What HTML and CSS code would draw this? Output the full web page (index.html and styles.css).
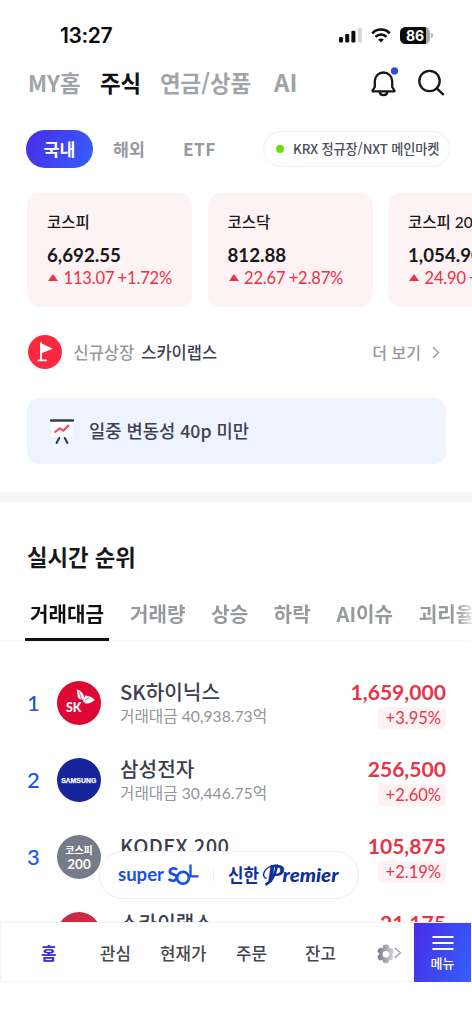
FILE: index.html
```html
<!DOCTYPE html>
<html lang="ko">
<head>
<meta charset="utf-8">
<meta name="viewport" content="width=device-width, initial-scale=1">
<title>주식</title>
<link rel="stylesheet" href="styles.css">
</head>
<body>
<div class="app">
  <header class="status">
    <span class="clock">13:27</span>
    <div class="status-icons">
      <svg width="25" height="16" viewBox="0 0 25 16"><rect x="1" y="10" width="4" height="5.5" rx="1.2"/><rect x="7.2" y="7" width="4" height="8.5" rx="1.2"/><rect x="13.4" y="3.7" width="4" height="11.8" rx="1.2"/><rect x="19.8" y="1" width="4" height="14.5" rx="1.2" fill="#d6d6d6"/></svg>
      <svg class="wifi" width="20" height="15" viewBox="0 0 20 15" fill="none" stroke="#0b0b0b" stroke-width="2.5"><path d="M1.2 5.4C6 .3 14 .3 18.800 5.400"/><path d="M4.500 8.800C7.500 5.700 12.500 5.700 15.500 8.800"/><path d="M10 14.600l-2.800-3.100c1.600-1.400 4-1.400 5.600 0z" fill="#0b0b0b" stroke="none"/></svg>
      <span class="battery">86</span><i class="battery-cap"></i>
    </div>
  </header>
  <nav class="main-nav">
    <a class="n-my">MY홈</a><a class="n-stock on">주식</a><a class="n-pension">연금/상품</a><a class="n-ai">AI</a>
    <div class="nav-actions">
      <svg width="30" height="32" viewBox="0 0 30 32" fill="none" stroke="#161616" stroke-width="2.300" stroke-linejoin="round" stroke-linecap="round"><path d="M4.800 14.200a8.700 8.700 0 0 1 17.400 0v5.800l2.200 3.500v.9H2.600v-.9l2.200-3.500z"/><path d="M9.800 25.200c.3 4 7.100 4 7.400 0"/><circle cx="24.500" cy="3.900" r="3.600" fill="#304be3" stroke="none"/></svg>
      <svg class="search" width="28" height="28" viewBox="0 0 28 28" fill="none" stroke="#161616" stroke-width="2.300" stroke-linecap="round"><circle cx="12.500" cy="12" r="10.200"/><path d="M19.800 19.300l6.300 6"/></svg>
    </div>
  </nav>
  <div class="chips">
    <a class="chip">국내</a><a class="sub s-over">해외</a><a class="sub s-etf">ETF</a>
    <div class="market"><i></i><span>KRX 정규장/NXT 메인마켓</span></div>
  </div>
  <section class="cards">
    <article class="card"><h3>코스피</h3><b>6,692.55</b><p><i></i><span>113.07 +1.72%</span></p></article>
    <article class="card"><h3>코스닥</h3><b>812.88</b><p><i></i><span>22.67 +2.87%</span></p></article>
    <article class="card"><h3>코스피 200</h3><b>1,054.90</b><p><i></i><span>24.90 +2.42%</span></p></article>
  </section>
  <div class="news">
    <svg width="34" height="34" viewBox="0 0 34 34"><circle cx="17" cy="17" r="17" fill="#fb2840"/><path d="M13 8v17.200M10.300 25.400h7.800" stroke="#fff" stroke-width="1.800" stroke-linecap="round"/><path d="M13 8.200l11.800 5.500L13 18.400z" fill="#fff"/></svg>
    <span class="news-kind">신규상장</span><strong>스카이랩스</strong>
    <a class="more">더 보기</a>
    <svg class="chev" width="8" height="13" viewBox="0 0 8 13" fill="none" stroke="#999ca1" stroke-width="1.400"><path d="M1 1.300l5.500 5.200L1 11.700"/></svg>
  </div>
  <div class="banner">
    <svg width="26" height="27" viewBox="0 0 26 27" fill="none" stroke-linecap="round"><path d="M2.500 3h21v16h-21z" fill="#fff"/><path d="M2 2.500h22" stroke="#373b4d" stroke-width="2.300"/><path d="M6.300 13.800l4.400-3.400 3.700 2.200 5-5" stroke="#ef5368" stroke-width="2.300"/><path d="M10.200 20l-2.600 4.900M15.800 20l2.600 4.900" stroke="#373b4d" stroke-width="2.100"/></svg>
    <span>일중 변동성 40p 미만</span>
  </div>
  <div class="divider"></div>
  <h2>실시간 순위</h2>
  <div class="tabs">
    <a class="tab on">거래대금</a><a class="tab">거래량</a><a class="tab">상승</a><a class="tab">하락</a><a class="tab">AI이슈</a><a class="tab">괴리율</a>
  </div>
  <section class="ranks">
    <div class="row"><span class="rank">1</span>
      <div class="logo sk"><svg width="44" height="44" viewBox="0 0 44 44"><text x="9" y="30.800" textLength="15.500" lengthAdjust="spacingAndGlyphs">SK</text><g fill="#fff"><path d="M19.700 8.500c4 1.100 6.600 3.700 7.700 7.500l-1 2.800c-2.100-.2-3.900-.7-5.400-1.800z"/><path d="M28.300 14.600c3.800.2 6.900 1.700 9.500 4.300-2.700 2.500-5.700 3.700-9.300 3.600l-2.500-2.600z"/></g><path d="M22.300 11l2.100 7M28 19.500l4-3" stroke="#dc0735" stroke-width=".6"/></svg></div>
      <div class="name"><b>SK하이닉스</b><small>거래대금 40,938.73억</small></div>
      <div class="price"><b>1,659,000</b><em>+3.95%</em></div></div>
    <div class="row"><span class="rank">2</span>
      <div class="logo samsung"><svg width="44" height="44" viewBox="0 0 44 44"><text x="4.200" y="24.700" textLength="35" lengthAdjust="spacing">SΛMSUNG</text></svg></div>
      <div class="name"><b>삼성전자</b><small>거래대금 30,446.75억</small></div>
      <div class="price"><b>256,500</b><em>+2.60%</em></div></div>
    <div class="row"><span class="rank">3</span>
      <div class="logo kospi"><span>코스피</span><b>200</b></div>
      <div class="name kodex"><b>KODEX 200</b></div>
      <div class="price"><b>105,875</b><em>+2.19%</em></div></div>
    <div class="row"><span class="rank"></span>
      <div class="logo sky"></div>
      <div class="name"><b>스카이랩스</b></div>
      <div class="price"><b>21,175</b></div></div>
  </section>
  <div class="floating">
    <svg width="259" height="47" viewBox="0 0 259 47">
      <text class="super" x="18" y="28.500" textLength="46" lengthAdjust="spacingAndGlyphs">super</text>
      <text class="sol" x="67.500" y="29.500" textLength="11" lengthAdjust="spacingAndGlyphs">S</text>
      <circle cx="83" cy="25.800" r="5.900" fill="none" stroke="#1550ea" stroke-width="2.600"/>
      <path d="M90.500 12.500V24.300H98.500" fill="none" stroke="#1550ea" stroke-width="2.300"/>
      <path d="M113.500 17v13" stroke="#ededf3"/>
      <text class="shinhan" x="128" y="29.500" textLength="31" lengthAdjust="spacingAndGlyphs">신한</text>
      <path d="M176.800 14.500C175.500 21 172.500 29.500 165.500 32.800" fill="none" stroke="#0b2f9d" stroke-width="2.600"/>
      <text class="premier-p" x="167" y="29.500" textLength="17" lengthAdjust="spacingAndGlyphs">P</text>
      <path d="M166.500 26.500C160.500 25 163.500 13.500 178 12.900" fill="none" stroke="#0b2f9d" stroke-width="1.400"/>
      <text class="premier" x="182.500" y="29.500" textLength="56" lengthAdjust="spacingAndGlyphs">remier</text>
    </svg>
  </div>
  <nav class="bottom">
    <a class="home">홈</a><a class="b-watch">관심</a><a class="b-now">현재가</a><a class="b-order">주문</a><a class="b-bal">잔고</a>
    <svg class="gear" width="28" height="22" viewBox="0 0 28 22"><defs><linearGradient id="gear-fade"><stop stop-color="#777a80"/><stop offset="1" stop-color="#d6d7da"/></linearGradient></defs><path fill="url(#gear-fade)" fill-rule="evenodd" d="M9 2.500Q12 .5 15 2.500L15.600 5.200 18.500 5.300Q20.500 8 19.500 10.500L17.600 11 19.400 13.200Q19 16.300 17 17.500L15.300 17 14.500 19.600Q12 21 9.200 19.600L8.500 17 5.800 17.600Q3.500 15.800 3.500 13.200L5.500 11 3.500 8.800Q3.800 6 6 4.600L8.600 5.300zM12 8a3.300 3.300 0 1 0 0 6.600 3.300 3.300 0 0 0 0-6.600z"/><path d="M20.800 4.800l5.500 5-5.500 5.200" fill="none" stroke="#a4a6aa" stroke-width="1.500"/></svg>
    <a class="menu"><svg width="22" height="16" viewBox="0 0 22 16" stroke="#fff" stroke-width="2"><path d="M.5 2h21M.5 8h21M.5 14h21"/></svg><span>메뉴</span></a>
  </nav>
</div>
</body>
</html>
```
FILE: styles.css
```css
* { box-sizing: border-box; }
body { margin: 0; background: #fff; }
.app {
  position: relative; width: 472px; height: 1024px; overflow: hidden;
  display: flex; flex-direction: column;
  font-family: Lato, "Noto Sans CJK KR", sans-serif; color: #17181a;
}
.app > * { flex-shrink: 0; }
h2, h3, p { margin: 0; }
.status { height: 58px; padding: 12px 39px 0 60px; display: flex; align-items: center; justify-content: space-between; }
.clock { font: 600 21px/24px Inter, sans-serif; letter-spacing: -.4px; color: #0b0b0b; padding-top: 2px; }
.status-icons { display: flex; align-items: center; fill: #0b0b0b; }
.wifi { margin: 0 9px 0 8px; }
.battery { width: 30px; height: 17px; border-radius: 5.500px; background: linear-gradient(90deg, #0b0b0b 86%, #aaa 86%); color: #fff; font: 700 14px/17px Inter, sans-serif; text-align: center; }
.battery-cap { width: 2px; height: 5px; margin-left: 1px; background: #b5b5b5; border-radius: 0 2px 2px 0; }
.main-nav { height: 50px; padding: 0 27px 0 28px; display: flex; align-items: center; font: 700 22.400px/32px "Noto Sans CJK KR", sans-serif; color: #a1a4a6; white-space: nowrap; }
.main-nav > a { margin-top: -2px; }
.main-nav .on { color: #111; }
.n-my { width: 72px; }
.n-stock { width: 60px; }
.n-pension { width: 114px; }
.n-ai { font-size: 24px; }
.nav-actions { margin-left: auto; display: flex; align-items: center; }
.search { margin-left: 17px; }
.chips { height: 85px; padding: 22px 22px 0 26px; display: flex; align-items: flex-start; font: 700 17.300px/37px "Noto Sans CJK KR", sans-serif; color: #979a9e; }
.chip { width: 67px; height: 38px; border-radius: 20px; text-align: center; color: #fff; background: linear-gradient(115deg, #4a2be8, #3460fb); }
.s-over { width: 71px; padding-left: 20px; }
.s-etf { padding-left: 19px; letter-spacing: .4px; }
.market { width: 187px; height: 36px; margin: 1px 0 0 auto; border: 1.500px solid #f1f1f3; border-radius: 18px; display: flex; align-items: center; padding-left: 12px; color: #4b4d5c; white-space: nowrap; font: 500 13.200px/32px "Noto Sans CJK KR", sans-serif; letter-spacing: -.1px; }
.market i { width: 8px; height: 8px; margin-right: 9px; border-radius: 50%; background: #6bdf0b; }
.cards { height: 114px; padding-left: 27px; display: flex; gap: 15.500px; }
.card { flex: 0 0 165px; padding: 18px 0 0 20px; border-radius: 13px; background: #fdf3f4; }
.card h3 { font-size: 15.500px; line-height: 23px; font-weight: 500; }
.card b { display: block; margin-top: 9px; font-size: 18.700px; line-height: 24px; font-weight: 700; }
.card p { display: flex; align-items: center; color: #ee2f47; font-size: 16.500px; line-height: 22px; letter-spacing: -.15px; word-spacing: -.8px; white-space: nowrap; }
.card i { border: 5px solid transparent; border-top: 0; border-bottom: 7.500px solid #ee2f47; margin: 0 5.500px 1px 1px; }
.news { height: 91px; padding: 0 32px 0 28px; display: flex; align-items: center; font: 500 16.500px/24px "Noto Sans CJK KR", sans-serif; color: #95989c; }
.news > * { margin-bottom: 2px; }
.news > svg { margin-bottom: 1px; }
.news-kind { margin-left: 11.500px; }
.news strong { margin-left: 7px; font-weight: 500; color: #3e4152; }
.more { margin-left: auto; font-size: 16px; }
.chev { margin-left: 11px; }
.banner { width: 419px; height: 66px; margin-left: 27px; padding-left: 22px; border-radius: 12px; background: #eef4fe; display: flex; align-items: center; gap: 14px; font: 500 17.700px/28px "Noto Sans CJK KR", sans-serif; color: #3e4152; }
.banner span { margin-bottom: 3px; }
.divider { height: 10px; margin-top: 28px; background: #f5f6f8; }
h2 { height: 87px; padding: 38px 0 0 27px; font: 700 22.300px/32px "Noto Sans CJK KR", sans-serif; }
.tabs { height: 53px; padding-left: 25px; display: flex; border-bottom: 2px solid #f7f7f8; white-space: nowrap; font: 700 20.100px/49px "Noto Sans CJK KR", sans-serif; color: #979a9d; -webkit-mask-image: linear-gradient(90deg, #000 457px, #0003 472px); mask-image: linear-gradient(90deg, #000 457px, #0003 472px); }
.tab { flex-shrink: 0; margin-right: 25.700px; height: 52px; }
.tab.on { width: 84px; text-align: center; color: #111; border-bottom: 3px solid #111; margin-right: 21px; }
.ranks { padding: 39px 26px 0 27px; }
.row { height: 77px; display: flex; align-items: flex-start; }
.rank { width: 30px; font-size: 22px; line-height: 44px; font-weight: 500; color: #1458e8; }
.logo { width: 44px; height: 44px; border-radius: 50%; overflow: hidden; color: #fff; }
.logo text { fill: #fff; font-weight: 900; }
.sk { background: #dc0735; } .sk text { font-size: 13.500px; }
.samsung { background: #17259b; } .samsung text { font: 700 6.800px "Liberation Sans", sans-serif; stroke: #fff; stroke-width: .25px; }
.kospi { background: #757b89; text-align: center; padding-top: 9px; }
.kospi span { display: block; font-size: 10px; line-height: 13px; font-weight: 700; }
.kospi b { display: block; font-size: 13.500px; line-height: 14px; }
.sky { background: #c92b40; }
.name { padding-left: 19px; white-space: nowrap; }
.name b { display: block; margin-top: -3px; font: 500 20.200px/28px "Noto Sans CJK KR", sans-serif; color: #3c3e4e; }
.kodex b { letter-spacing: .3px; }
.name small { display: block; font-size: 15.700px; line-height: 21px; color: #929599; }
.price { margin-left: auto; display: flex; flex-direction: column; align-items: flex-end; color: #e63548; }
.price b { margin-top: -3px; font-size: 21.100px; line-height: 27px; }
.price em { margin-top: 2px; padding: 0 5px 0 8px; border-radius: 4px; background: #fff2f3; font-style: normal; font-size: 16.500px; line-height: 22px; }
.floating { position: absolute; left: 99px; top: 851px; width: 260px; height: 48px; border: 1px solid #eeeef3; border-radius: 24px; background: #fff; }
.super { font: 700 19px Lato, sans-serif; fill: #1550ea; }
.sol { font: 900 20px Lato, sans-serif; fill: #1550ea; }
.shinhan { font: 700 18px "Noto Sans CJK KR", sans-serif; fill: #0b2f9d; }
.premier, .premier-p { font: italic 900 19px Lato, sans-serif; fill: #0b2f9d; }
.premier-p { font-size: 23px; font-weight: 700; }
.bottom { position: absolute; left: 0; top: 922px; width: 472px; height: 102px; background: #fff; border-top: 1px solid #f1f1f2; display: flex; font: 500 16.800px/61px "Noto Sans CJK KR", sans-serif; color: #44464f; white-space: nowrap; }
.bottom::before { content: ""; position: absolute; inset: 0 1px 42px 0; border: 1px solid #f4f4f6; border-top: 0; }
.home { padding-left: 41px; width: 100px; font-weight: 700; color: #352fdc; }
.b-watch { width: 60px; } .b-now { width: 76px; } .b-order { width: 69px; } .b-bal { width: 69px; }
.gear { margin-top: 20px; }
.menu { position: relative; width: 57px; height: 59px; margin-left: auto; margin-right: 1px; padding-top: 12px; display: flex; flex-direction: column; align-items: center; background: linear-gradient(110deg, #4a2be8, #3460fb); color: #fff; font-size: 13px; line-height: 24px; }
```
